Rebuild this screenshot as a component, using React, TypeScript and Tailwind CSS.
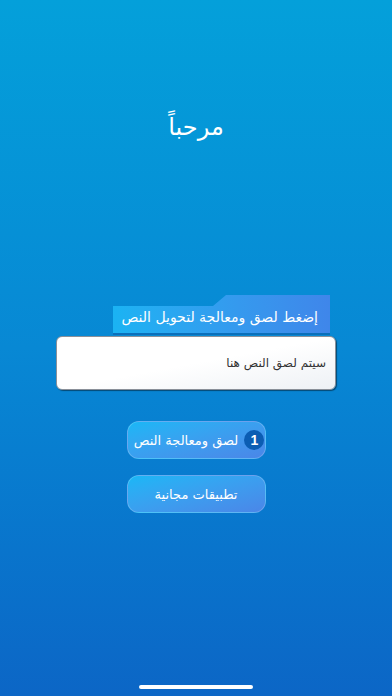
export default function App() {
    return (
        <div
            dir="rtl"
            className="relative flex h-[696px] w-full flex-col items-center overflow-hidden bg-gradient-to-b from-[#04a0da] via-[#0888d4] to-[#0c66c6] font-['DejaVu_Sans',sans-serif]"
        >
            {/* العنوان */}
            <h1 className="mt-[111px] text-[24px] leading-[32px] text-white">مرحباً</h1>

            {/* بطاقة اللصق */}
            <div className="mt-[152px] flex w-[280px] flex-col">
                <div
                    className="ml-[57px] mr-[6px] flex h-[38px] items-end justify-start bg-gradient-to-r from-[#1ab3f3] to-[#3f86ea] pb-[7px] pr-[12px] [clip-path:polygon(0_11px,100px_11px,113px_0,100%_0,100%_100%,0_100%)]"
                >
                    <span className="text-[14px] leading-[18px] text-white">إضغط لصق ومعالجة لتحويل النص</span>
                </div>
                <div className="ml-[57px] mr-[6px] h-[2px] bg-[#0b5ea8]/60" />
                <div className="mt-[1px] flex h-[54px] items-center rounded-[6px] border border-[#8a9099] bg-gradient-to-br from-white via-white to-[#eef1f5] px-[9px] shadow-[1px_1px_1px_rgba(0,0,0,0.45)]">
                    <span className="text-[12px] text-[#333]">سيتم لصق النص هنا</span>
                </div>
            </div>

            {/* الأزرار */}
            <div className="mt-[31px] flex flex-col gap-[16px]">
                <button
                    type="button"
                    className="flex h-[38px] w-[139px] items-center justify-center gap-[6px] rounded-[12px] border border-white/20 bg-gradient-to-br from-[#17b7f6] to-[#4a86e8] pl-[6px] text-white"
                >
                    <span className="flex h-[20px] w-[20px] items-center justify-center rounded-full bg-[#0b5db3] font-['Liberation_Sans',sans-serif] text-[14px] font-bold leading-none">
                        1
                    </span>
                    <span className="text-[13px] leading-none">لصق ومعالجة النص</span>
                </button>
                <button
                    type="button"
                    className="flex h-[38px] w-[139px] items-center justify-center rounded-[12px] border border-white/20 bg-gradient-to-br from-[#17b7f6] to-[#4a86e8] text-white"
                >
                    <span className="text-[13px] leading-none">تطبيقات مجانية</span>
                </button>
            </div>

            <div className="absolute bottom-[7px] left-[139px] h-[4px] w-[114px] rounded-full bg-white" />
        </div>
    );
}
